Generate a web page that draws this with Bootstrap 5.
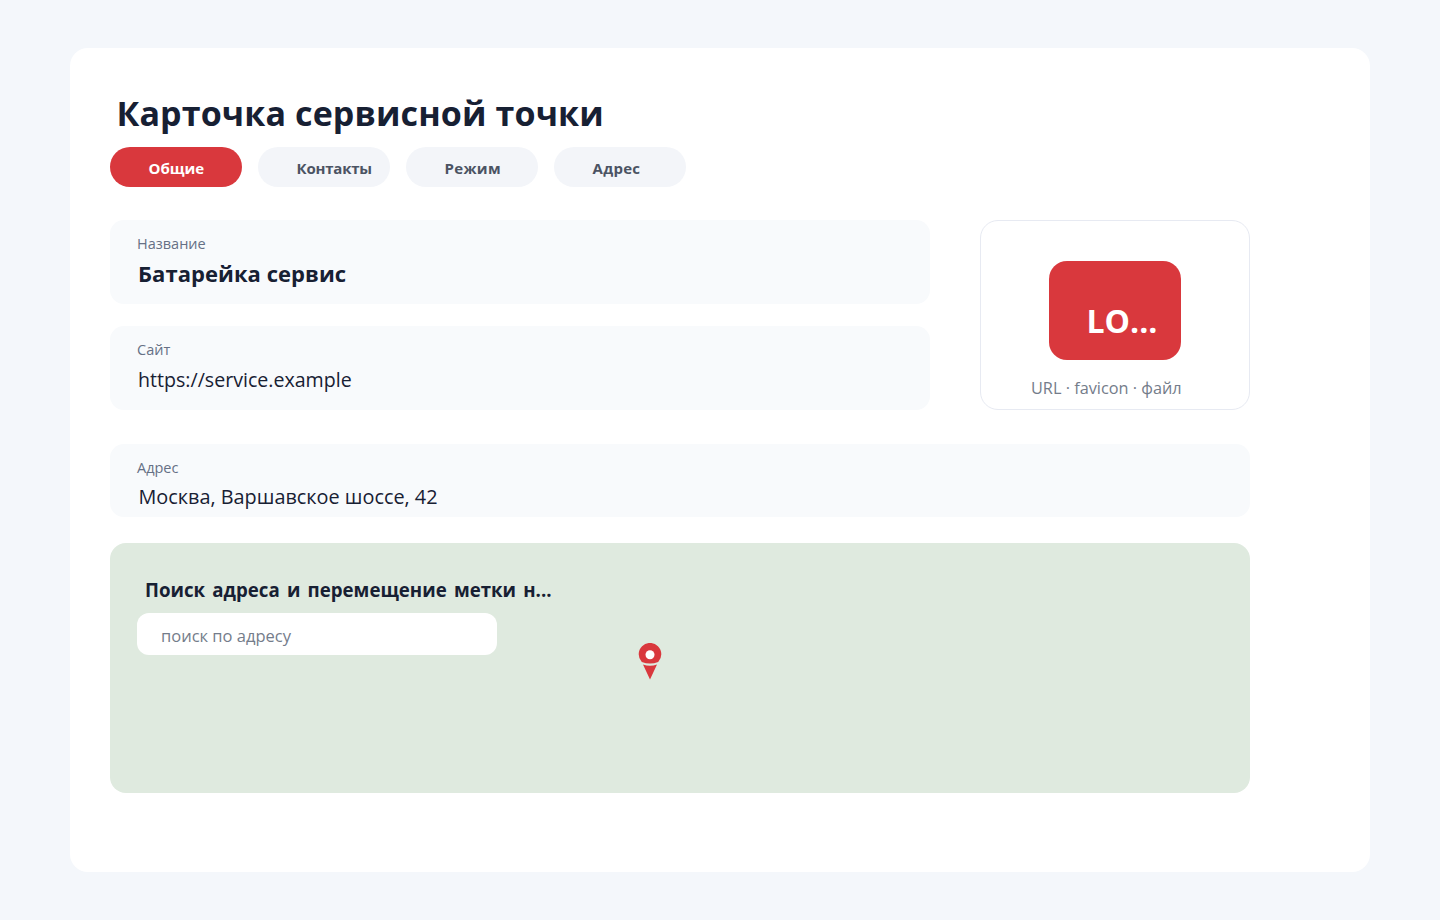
<!DOCTYPE html>
<html lang="ru">
<head>
<meta charset="utf-8">
<title>Карточка сервисной точки</title>
<link href="https://cdn.jsdelivr.net/npm/bootstrap@5.3.0/dist/css/bootstrap.min.css" rel="stylesheet">
<style>
html,body{height:100%}
body{background:#f4f7fb;font-family:"Open Sans","Noto Sans",sans-serif;color:#172033;overflow:hidden}
.shell{width:1300px;height:824px;margin:48px 0 0 70px;background:#fff;border-radius:18px;padding:41px 40px 0}
.inner{width:1140px}
.page-title{font-size:34px;font-weight:700;line-height:46px;margin:1px 0 11px 6.5px;color:#172033;height:46px;letter-spacing:.12px}
.pill{width:132px;height:40px;border-radius:20px;background:#f3f5f9;color:#4b5363;font-size:15px;font-weight:700;border:0;padding:2px 0 0 38.500px;text-align:left;line-height:36px;display:block}
.pill.on{background:#d9383d;color:#fff}
.pill-tight{letter-spacing:-.2px}
.pill-wide{letter-spacing:.3px}
.tabs-row{gap:16px;margin-bottom:33px}
.field-box{background:#f8fafc;border-radius:14px;padding:14px 28px 0}
.field-label{font-size:14.500px;line-height:20px;color:#667085;margin-left:-1px}
.val-strong{font-size:22px;line-height:30px;font-weight:700;margin-top:4px;color:#172033;letter-spacing:.05px}
.val-site{font-size:19.600px;line-height:30px;margin-top:5px;color:#172033}
.val-addr{font-size:19.850px;line-height:30px;margin-top:4px;margin-left:.5px;color:#172033}
.fields-col{width:820px;gap:22px}
.h84{height:84px}
.h73{height:73px}
.addr-box{margin-top:34px}
.logo-box{width:270px;height:190px;border:1px solid #e7eaf2;border-radius:18px;padding-top:40px}
.logo-tile{width:132px;height:99px;background:#d9383d;border-radius:18px;color:#fff;font-size:32px;font-weight:700;line-height:44px;padding:38px 0 0 37.500px;margin-left:68px}
.logo-cap{font-size:16.300px;line-height:24px;color:#747c8a;margin:16px 0 0 50px}
.map-box{height:250px;background:#dfeadf;border-radius:16px;padding:33px 27px 0;position:relative;margin-top:26px}
.map-title{font-size:18.700px;font-weight:700;line-height:28px;color:#172033;margin-left:8px;word-spacing:2.300px}
.map-search{width:360px;height:42px;background:#fff;border-radius:12px;border:0;font-size:16.500px;color:#747c8a;padding:2px 24px 0;margin-top:9px}
.map-search::placeholder{color:#747c8a;opacity:1}
.map-pin{position:absolute;left:528px;top:99.500px;width:24px;height:38px}
</style>
</head>
<body>
<div class="shell">
  <div class="inner">
    <h1 class="page-title">Карточка сервисной точки</h1>
    <div class="d-flex tabs-row">
      <button class="pill on">Общие</button>
      <button class="pill pill-tight">Контакты</button>
      <button class="pill pill-wide">Режим</button>
      <button class="pill pill-wide">Адрес</button>
    </div>
    <div class="d-flex justify-content-between">
      <div class="d-flex flex-column fields-col">
        <div class="field-box h84">
          <div class="field-label">Название</div>
          <div class="val-strong">Батарейка сервис</div>
        </div>
        <div class="field-box h84">
          <div class="field-label">Сайт</div>
          <div class="val-site">https://service.example</div>
        </div>
      </div>
      <div class="logo-box">
        <div class="logo-tile">LO...</div>
        <div class="logo-cap">URL · favicon · файл</div>
      </div>
    </div>
    <div class="field-box h73 addr-box">
      <div class="field-label">Адрес</div>
      <div class="val-addr">Москва, Варшавское шоссе, 42</div>
    </div>
    <div class="map-box">
      <div class="map-title">Поиск адреса и перемещение метки н...</div>
      <input class="map-search d-block" type="text" placeholder="поиск по адресу">
      <svg class="map-pin" viewBox="0 0 24 38" aria-hidden="true">
        <path d="M3.800 19A11.300 11.300 0 1 1 20.200 19Q12 22 3.800 19Z" fill="#d9383d"/>
        <path d="M5 21.500Q12 24 19 21.500L12 36.500Z" fill="#d9383d"/>
        <circle cx="12" cy="11.800" r="4.500" fill="#fff"/>
      </svg>
    </div>
  </div>
</div>
<script src="https://cdn.jsdelivr.net/npm/bootstrap@5.3.0/dist/js/bootstrap.bundle.min.js"></script>
</body>
</html>
